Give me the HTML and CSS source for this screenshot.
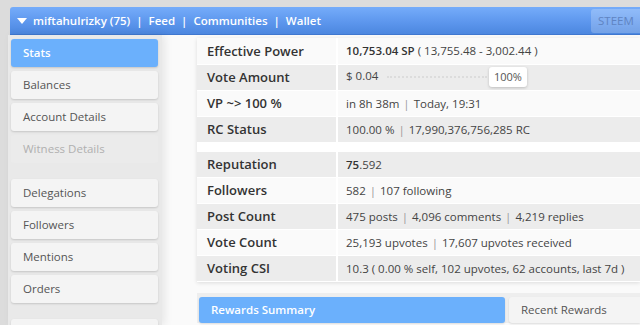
FILE: index.html
```html
<!DOCTYPE html>
<html>
<head>
<meta charset="utf-8">
<link rel="stylesheet" href="styles.css">
</head>
<body>
<div class="page">
  <header class="topbar">
    <div class="nav">
      <svg class="caret" width="10" height="7" viewBox="0 0 10 7"><path d="M0 0 H10 L5 6 Z" fill="#fff"/></svg>
      <span class="user">miftahulrizky (75)</span>
      <span class="sep">|</span><span>Feed</span>
      <span class="sep">|</span><span>Communities</span>
      <span class="sep">|</span><span>Wallet</span>
    </div>
    <div class="steem">STEEM</div>
  </header>
  <div class="body">
    <aside class="side">
      <div class="item active">Stats</div>
      <div class="item">Balances</div>
      <div class="item">Account Details</div>
      <div class="item disabled">Witness Details</div>
      <div class="item gap">Delegations</div>
      <div class="item">Followers</div>
      <div class="item">Mentions</div>
      <div class="item">Orders</div>
      <div class="item gap"></div>
    </aside>
    <main class="main">
      <table class="stats">
        <colgroup><col class="c1"><col class="c2"></colgroup>
        <tr class="w"><td class="lbl">Effective Power</td><td class="val"><b>10,753.04 SP</b> ( 13,755.48 - 3,002.44 )</td></tr>
        <tr class="g"><td class="lbl">Vote Amount</td><td class="val"><span class="va">$ 0.04</span><span class="slider"><span class="dots"></span><span class="badge">100%</span></span></td></tr>
        <tr class="w"><td class="lbl">VP ~&gt; 100 %</td><td class="val">in 8h 38m <span class="p">|</span> Today, 19:31</td></tr>
        <tr class="g"><td class="lbl">RC Status</td><td class="val">100.00 % <span class="p">|</span> 17,990,376,756,285 RC</td></tr>
        <tr class="spacer"><td></td><td></td></tr>
        <tr class="g"><td class="lbl">Reputation</td><td class="val"><b>75</b>.592</td></tr>
        <tr class="w"><td class="lbl">Followers</td><td class="val">582 <span class="p">|</span> 107 following</td></tr>
        <tr class="g"><td class="lbl">Post Count</td><td class="val">475 posts <span class="p">|</span> 4,096 comments <span class="p">|</span> 4,219 replies</td></tr>
        <tr class="w"><td class="lbl">Vote Count</td><td class="val">25,193 upvotes <span class="p">|</span> 17,607 upvotes received</td></tr>
        <tr class="g"><td class="lbl">Voting CSI</td><td class="val">10.3 ( 0.00 % self, 102 upvotes, 62 accounts, last 7d )</td></tr>
      </table>
      <div class="tabs">
        <div class="tab on">Rewards Summary</div>
        <div class="tab">Recent Rewards</div>
      </div>
    </main>
  </div>
</div>
</body>
</html>
```

FILE: styles.css
```css
* { box-sizing: border-box; }
html, body { margin: 0; padding: 0; }
body {
  background: #dcdcdc;
  font-family: "Open Sans", "Noto Sans", sans-serif;
  font-size: 11.5px;
  color: #444;
  overflow: hidden;
  height: 325px;
}
.page { padding: 7px 0 0 8px; height: 325px; overflow: hidden; }
.topbar {
  margin-left: 2px;
  height: 28px;
  display: flex;
  align-items: center;
  justify-content: space-between;
  background: linear-gradient(#75acfa, #5b95ec 60%, #4c87df);
  border-bottom: 1px solid #3f77cf;
  border-radius: 3px 0 0 0;
  color: #fff;
  font-weight: 600;
  font-size: 11.5px;
}
.nav { display: flex; align-items: center; padding-left: 7px; }
.caret { margin-right: 6px; margin-top: 1px; }
.sep { margin: 0 6px; }
.steem {
  height: 24px;
  width: 50px;
  margin-right: -1px;
  background: rgba(255,255,255,0.22);
  border-radius: 3px 0 0 3px;
  color: #5f84c2;
  font-size: 11.5px;
  font-weight: 400;
  display: flex;
  align-items: center;
  padding-left: 7px;
}
.body { display: flex; height: 290px; }
.side {
  width: 154px;
  background: #e9e9e9;
  padding: 4px 2px 0 3px;
  box-shadow: 3px 0 8px rgba(0,0,0,0.08);
  position: relative;
  z-index: 1;
  overflow: hidden;
}
.item {
  height: 28px;
  margin-bottom: 4px;
  width: 147px;
  background: #f4f4f4;
  border-radius: 3px;
  box-shadow: 0 1px 2px rgba(0,0,0,0.15);
  padding-left: 12px;
  line-height: 28px;
  color: #555;
  font-size: 11.5px;
}
.item.active { background: #6bb0fc; color: #fff; font-weight: 600; }
.item.disabled { background: #ebebeb; box-shadow: none; color: #b0b0b0; }
.item.gap { margin-top: 16px; }
.main {
  flex: 1;
  min-width: 0;
  background: #fafafa;
  padding: 3px 0 0 35px;
}
.stats {
  width: 100%;
  table-layout: fixed;
  border-collapse: collapse;
  background: #fff;
  box-shadow: 0 1px 4px rgba(0,0,0,0.12);
}
.c1 { width: 140px; }
.stats td {
  height: 26px;
  padding: 0;
  border-bottom: 1px solid #fff;
  white-space: nowrap;
  overflow: hidden;
}
.stats td.val { border-left: 2px solid #fff; }
.stats tr.g td { background: #ececec; }
.stats tr.w td { background: #fafafa; }
.stats tr.spacer td { height: 9px; background: #fff; }
.lbl { padding-left: 10px !important; font-weight: 600; color: #333; font-size: 13px; }
.val { padding-left: 8px !important; color: #444; font-size: 11.5px; }
.val b { font-weight: 600; color: #333; }
.p { color: #999; margin: 0 1px; }
.va { display: inline-block; width: 41px; }
.slider { display: inline-flex; align-items: center; vertical-align: middle; }
.dots { display: inline-block; width: 100px; border-top: 2px dotted #dcdcdc; }
.badge {
  margin-left: 2px;
  background: #fff;
  border-radius: 3px;
  box-shadow: 0 1px 3px rgba(0,0,0,0.2);
  font-size: 11px;
  color: #555;
  padding: 1px 5px;
  line-height: 18px;
}
.tabs {
  margin-top: 11px;
  background: #eeeeee;
  padding: 4px 0 0 2px;
  display: flex;
  gap: 4px;
}
.tab {
  height: 26px;
  line-height: 26px;
  background: #f4f4f4;
  border-radius: 3px 0 0 3px;
  box-shadow: 0 1px 2px rgba(0,0,0,0.12);
  padding-left: 12px;
  color: #555;
  flex: 1;
  font-size: 11.5px;
}
.tab.on { flex: 0 0 306px; background: #6bb0fc; color: #fff; font-weight: 600; border-radius: 3px; }
```
